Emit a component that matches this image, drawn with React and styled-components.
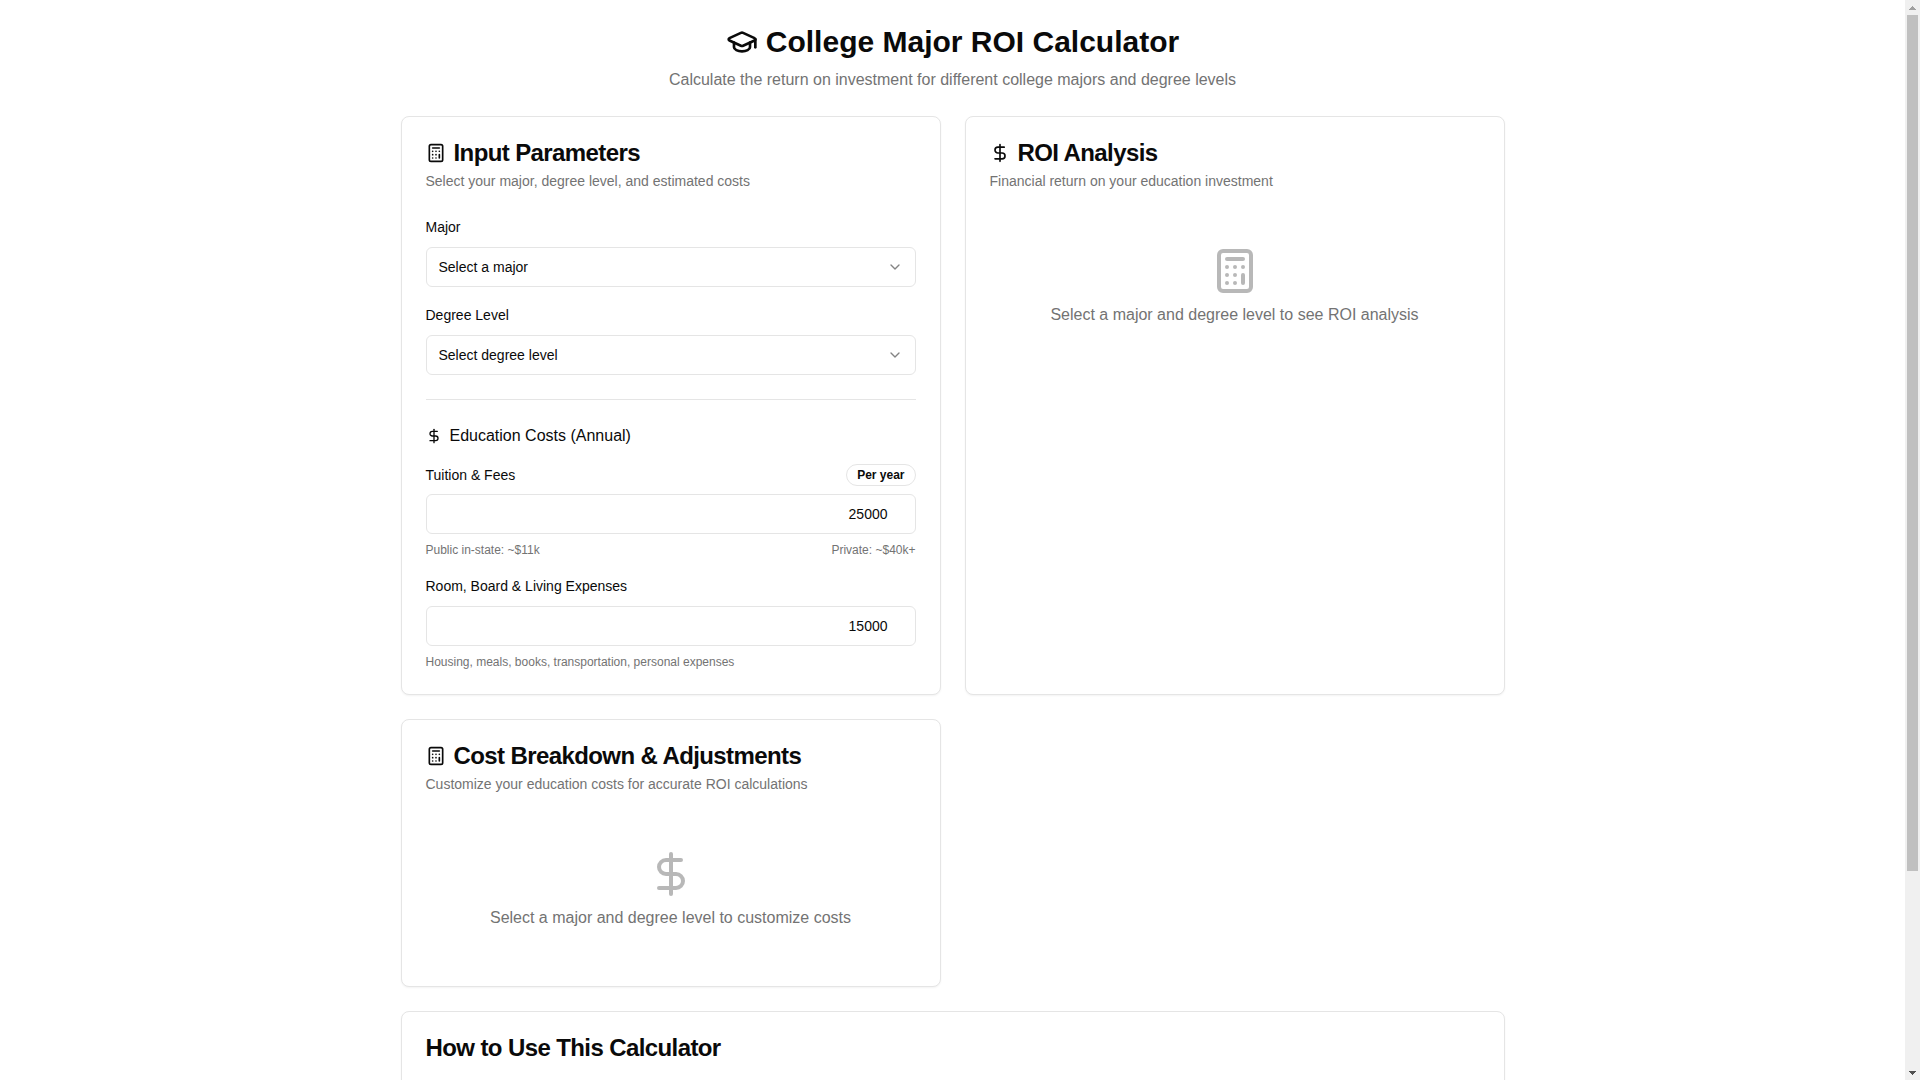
import { useEffect, useRef, useState } from "react";
import styled, { createGlobalStyle } from "styled-components";
import { Calculator, ChevronDown, DollarSign, GraduationCap } from "lucide-react";

const GlobalStyle = createGlobalStyle`
  *, *::before, *::after {
    box-sizing: border-box;
  }
  body {
    margin: 0;
    background-color: #ffffff;
    color: #0a0a0a;
    font-family: "Liberation Sans", Arial, sans-serif;
    font-size: 16px;
    line-height: 24px;
  }
  h1, h2, h3, p {
    margin: 0;
  }
  svg {
    display: block;
    flex-shrink: 0;
  }
`;

const Shell = styled.div`
  display: flex;
  height: 100vh;
`;

const ScrollArea = styled.div`
  flex: 1;
  min-width: 0;
  overflow-y: auto;
  scrollbar-width: none;
`;

const ScrollBar = styled.div`
  display: flex;
  flex-direction: column;
  width: 15px;
  background-color: #f0f0f0;
`;

const ScrollButton = styled.button`
  display: flex;
  align-items: center;
  justify-content: center;
  height: 15px;
  padding: 0;
  border: 0;
  background: none;
  color: ${(props) => (props.disabled ? "#a0a0a0" : "#505050")};
`;

const ScrollTrack = styled.div`
  flex: 1;
  padding: 0 2px;
`;

const ScrollThumb = styled.div`
  background-color: #c0c0c0;
`;

const Page = styled.main`
  max-width: 1152px;
  margin: 0 auto;
  padding: 24px;
  display: flex;
  flex-direction: column;
  gap: 24px;
`;

const PageHeader = styled.header`
  display: flex;
  flex-direction: column;
  gap: 8px;
  text-align: center;
`;

const PageTitle = styled.h1`
  display: flex;
  align-items: center;
  justify-content: center;
  gap: 8px;
  font-size: 30px;
  line-height: 36px;
  font-weight: 700;
`;

const PageSubtitle = styled.p`
  color: #737373;
`;

const CardGrid = styled.div`
  display: grid;
  grid-template-columns: repeat(2, minmax(0, 1fr));
  gap: 24px;

  @media (max-width: 1023px) {
    grid-template-columns: minmax(0, 1fr);
  }
`;

const CardBox = styled.section`
  border: 1px solid #e5e5e5;
  border-radius: 8px;
  background-color: #ffffff;
  box-shadow: 0 1px 2px rgba(0, 0, 0, 0.05);
`;

const CardHeader = styled.div`
  display: flex;
  flex-direction: column;
  gap: 6px;
  padding: 24px;
`;

const CardTitle = styled.h2`
  display: flex;
  align-items: center;
  gap: 8px;
  font-size: 24px;
  line-height: 24px;
  font-weight: 600;
  letter-spacing: -0.025em;
`;

const CardDescription = styled.p`
  font-size: 14px;
  line-height: 20px;
  color: #737373;
`;

const CardContent = styled.div`
  padding: 0 24px 24px;
`;

const GuideContent = styled(CardContent)`
  min-height: 216px;
`;

const FieldList = styled.div`
  display: flex;
  flex-direction: column;
  gap: 16px;
`;

const Field = styled.div`
  display: flex;
  flex-direction: column;
  gap: 8px;
`;

const Label = styled.label`
  font-size: 14px;
  font-weight: 500;
`;

const SelectWrap = styled.div`
  position: relative;
`;

const Select = styled.select`
  appearance: none;
  display: block;
  width: 100%;
  height: 40px;
  padding: 8px 36px 8px 12px;
  border: 1px solid #e5e5e5;
  border-radius: 6px;
  background-color: #ffffff;
  color: inherit;
  font-family: inherit;
  font-size: 14px;
  line-height: 20px;
`;

const SelectArrow = styled(ChevronDown)`
  position: absolute;
  top: 12px;
  right: 13px;
  opacity: 0.5;
  pointer-events: none;
`;

const Divider = styled.hr`
  width: 100%;
  height: 1px;
  margin: 24px 0;
  border: 0;
  background-color: #e5e5e5;
`;

const SectionTitle = styled.h3`
  display: flex;
  align-items: center;
  gap: 8px;
  font-size: 16px;
  font-weight: 500;
`;

const SpreadRow = styled.div`
  display: flex;
  align-items: center;
  justify-content: space-between;
`;

const LabelRow = styled(SpreadRow)`
  height: 22px;
`;

const Badge = styled.span`
  padding: 2px 10px;
  border: 1px solid #e5e5e5;
  border-radius: 9999px;
  font-size: 12px;
  line-height: 16px;
  font-weight: 600;
`;

const NumberInput = styled.input`
  width: 100%;
  height: 40px;
  padding: 8px 12px;
  border: 1px solid #e5e5e5;
  border-radius: 6px;
  background-color: #ffffff;
  color: inherit;
  font-family: inherit;
  font-size: 14px;
  line-height: 20px;
  text-align: right;
`;

const Hint = styled.p`
  font-size: 12px;
  line-height: 16px;
  color: #737373;
`;

const EmptyBox = styled.div`
  display: flex;
  flex-direction: column;
  align-items: center;
  gap: 8px;
  padding: 32px 0;
  color: #737373;
  text-align: center;

  svg {
    opacity: 0.5;
  }
`;

const MAJORS = ["Computer Science", "Engineering", "Business", "Nursing"];
const DEGREES = ["Associate", "Bachelor's", "Master's", "Doctorate"];

function SelectField({ id, label, placeholder, options, value, onChange }) {
  return (
    <Field>
      <Label htmlFor={id}>{label}</Label>
      <SelectWrap>
        <Select id={id} value={value} onChange={(e) => onChange(e.target.value)}>
          <option value="">{placeholder}</option>
          {options.map((el) => (
            <option key={el} value={el}>
              {el}
            </option>
          ))}
        </Select>
        <SelectArrow size={16} />
      </SelectWrap>
    </Field>
  );
}

function Card({ icon: Icon, title, description, children }) {
  return (
    <CardBox>
      <CardHeader>
        <CardTitle>
          {Icon && <Icon size={20} />}
          {title}
        </CardTitle>
        {description && <CardDescription>{description}</CardDescription>}
      </CardHeader>
      {children}
    </CardBox>
  );
}

function EmptyState({ icon: Icon, text }) {
  return (
    <CardContent>
      <EmptyBox>
        <Icon size={48} />
        <p>{text}</p>
      </EmptyBox>
    </CardContent>
  );
}

function InputCard() {
  const [major, setMajor] = useState("");
  const [degree, setDegree] = useState("");
  const [tuition, setTuition] = useState("25000");
  const [living, setLiving] = useState("15000");

  return (
    <Card
      icon={Calculator}
      title="Input Parameters"
      description="Select your major, degree level, and estimated costs"
    >
      <CardContent>
        <FieldList>
          <SelectField
            id="major"
            label="Major"
            placeholder="Select a major"
            options={MAJORS}
            value={major}
            onChange={setMajor}
          />
          <SelectField
            id="degree"
            label="Degree Level"
            placeholder="Select degree level"
            options={DEGREES}
            value={degree}
            onChange={setDegree}
          />
        </FieldList>
        <Divider />
        <FieldList>
          <SectionTitle>
            <DollarSign size={16} />
            Education Costs (Annual)
          </SectionTitle>
          <Field>
            <LabelRow>
              <Label htmlFor="tuition">Tuition &amp; Fees</Label>
              <Badge>Per year</Badge>
            </LabelRow>
            <NumberInput
              id="tuition"
              type="number"
              value={tuition}
              onChange={(e) => setTuition(e.target.value)}
            />
            <SpreadRow>
              <Hint>Public in-state: ~$11k</Hint>
              <Hint>Private: ~$40k+</Hint>
            </SpreadRow>
          </Field>
          <Field>
            <Label htmlFor="living">Room, Board &amp; Living Expenses</Label>
            <NumberInput
              id="living"
              type="number"
              value={living}
              onChange={(e) => setLiving(e.target.value)}
            />
            <Hint>Housing, meals, books, transportation, personal expenses</Hint>
          </Field>
        </FieldList>
      </CardContent>
    </Card>
  );
}

function PageScrollBar({ areaRef }) {
  const [scroll, setScroll] = useState({ top: 0, view: 1, full: 1 });

  useEffect(() => {
    const area = areaRef.current;
    const update = () =>
      setScroll({ top: area.scrollTop, view: area.clientHeight, full: area.scrollHeight });
    update();
    area.addEventListener("scroll", update);
    window.addEventListener("resize", update);
    return () => {
      area.removeEventListener("scroll", update);
      window.removeEventListener("resize", update);
    };
  }, [areaRef]);

  const { top, view, full } = scroll;
  const scrollBy = (step) => areaRef.current.scrollBy({ top: step });

  return (
    <ScrollBar>
      <ScrollButton aria-label="Scroll up" disabled={top <= 0} onClick={() => scrollBy(-40)}>
        <svg width="7" height="4" viewBox="0 0 7 4" fill="currentColor" shapeRendering="crispEdges">
          <path d="M3 0h1v1h1v1h1v1h1v1H0V3h1V2h1V1h1z" />
        </svg>
      </ScrollButton>
      <ScrollTrack>
        <ScrollThumb
          style={{ height: `${(view / full) * 100}%`, marginTop: `${(top / full) * 100}%` }}
        />
      </ScrollTrack>
      <ScrollButton
        aria-label="Scroll down"
        disabled={top + view >= full}
        onClick={() => scrollBy(40)}
      >
        <svg width="7" height="4" viewBox="0 0 7 4" fill="currentColor" shapeRendering="crispEdges">
          <path d="M0 0h7v1H6v1H5v1H4v1H3V3H2V2H1V1H0z" />
        </svg>
      </ScrollButton>
    </ScrollBar>
  );
}

function App() {
  const areaRef = useRef(null);

  return (
    <>
      <GlobalStyle />
      <Shell>
        <ScrollArea ref={areaRef}>
          <Page>
            <PageHeader>
              <PageTitle>
                <GraduationCap size={32} />
                College Major ROI Calculator
              </PageTitle>
              <PageSubtitle>
                Calculate the return on investment for different college majors and degree levels
              </PageSubtitle>
            </PageHeader>
            <CardGrid>
              <InputCard />
              <Card
                icon={DollarSign}
                title="ROI Analysis"
                description="Financial return on your education investment"
              >
                <EmptyState
                  icon={Calculator}
                  text="Select a major and degree level to see ROI analysis"
                />
              </Card>
              <Card
                icon={Calculator}
                title="Cost Breakdown &amp; Adjustments"
                description="Customize your education costs for accurate ROI calculations"
              >
                <EmptyState
                  icon={DollarSign}
                  text="Select a major and degree level to customize costs"
                />
              </Card>
            </CardGrid>
            <Card title="How to Use This Calculator">
              <GuideContent />
            </Card>
          </Page>
        </ScrollArea>
        <PageScrollBar areaRef={areaRef} />
      </Shell>
    </>
  );
}

export default App;
